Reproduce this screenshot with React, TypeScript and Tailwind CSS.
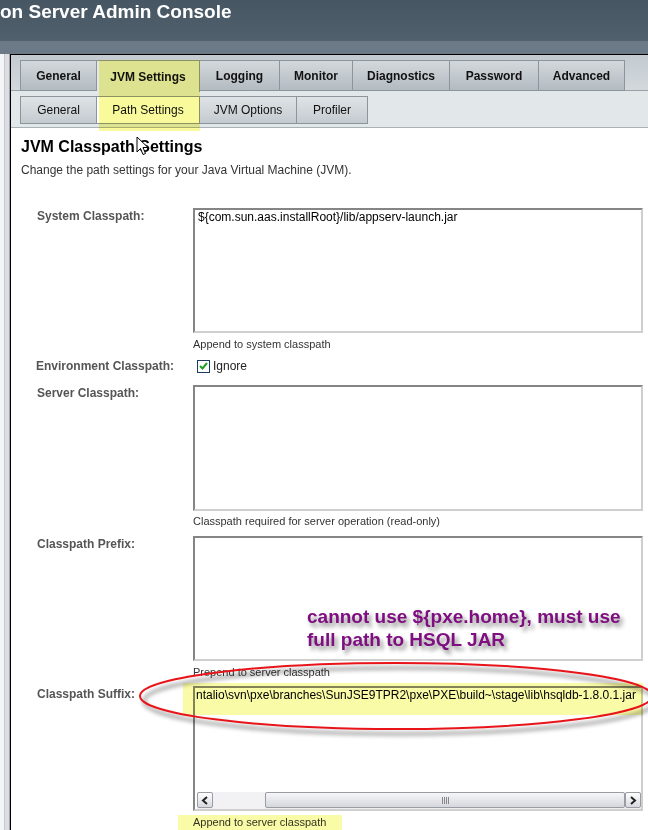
import React from "react";

const mainTabs = [
  { label: "General", w: "w-[77px]" },
  { label: "JVM Settings", w: "w-[103px]", active: true },
  { label: "Logging", w: "w-[80px]" },
  { label: "Monitor", w: "w-[73px]" },
  { label: "Diagnostics", w: "w-[97px]" },
  { label: "Password", w: "w-[89px]" },
  { label: "Advanced", w: "w-[86px]" },
];

const subTabs = [
  { label: "General", w: "w-[77px]" },
  { label: "Path Settings", w: "w-[103px]", active: true },
  { label: "JVM Options", w: "w-[97px]" },
  { label: "Profiler", w: "w-[71px]" },
];

const Box = ({ children, h = "h-[125px]" }: any) => (
  <div className={`w-[450px] ${h} border-2 border-t-[#858585] border-l-[#858585] border-r-[#cfcfcf] border-b-[#cfcfcf] bg-white relative overflow-hidden`}>
    {children}
  </div>
);

const Help = ({ text, mt }: any) => (
  <div className={`${mt} ml-[156px] text-[11px] leading-[12px] text-[#333]`}>{text}</div>
);

const Label = ({ text }: any) => (
  <div className="w-[156px] shrink-0 pt-[1px] text-[12px] leading-[14px] font-bold text-[#555]">{text}</div>
);

const Chevron = ({ dir }: any) => (
  <svg width="8" height="9" viewBox="0 0 8 9">
    <path
      d={dir === "left" ? "M6 1 L2 4.5 L6 8" : "M2 1 L6 4.5 L2 8"}
      stroke="#222"
      strokeWidth="2"
      fill="none"
    />
  </svg>
);

export default function App() {
  return (
    <div className="w-[648px] h-[830px] overflow-hidden relative bg-white font-['Liberation_Sans',Arial,sans-serif]">
      {/* header */}
      <div className="h-[41px] bg-gradient-to-b from-[#465663] to-[#50606d] text-white font-bold text-[19px] leading-[22px] pt-[1px] whitespace-nowrap">
        on Server Admin Console
      </div>
      <div className="h-[13px] bg-[#6b7a86]" />

      <div className="flex h-[776px]">
        {/* left strip */}
        <div className="w-[10px] flex bg-[#eceef0]">
          <div className="w-[4px] bg-[#f4f5f6]" />
          <div className="w-[1px] bg-[#c8c9cc]" />
          <div className="w-[4px] bg-[#dcdce4]" />
          <div className="w-[1px] bg-[#a4a6aa]" />
        </div>

        <div className="flex-1 border-l border-t border-black">
          {/* main tabs */}
          <div className="h-[36px] pt-[5px] pl-[9px] bg-gradient-to-b from-[#c4cbd0] to-[#d2d8dc] border-b border-[#9aa2a8] flex">
            {mainTabs.map((t, i) => (
              <div
                key={t.label}
                className={`${t.w} h-[31px] flex items-center justify-center text-[12px] font-bold text-[#111] border-t border-r border-[#8c959c] ${i === 0 ? "border-l" : ""} ${
                  t.active ? "bg-[#e2e7ea] h-[32px]" : "bg-gradient-to-b from-[#d3d8dc] to-[#b3bbc1] border-b"
                }`}
              >
                {t.label}
              </div>
            ))}
          </div>
          {/* sub tabs */}
          <div className="h-[37px] pt-[5px] pl-[9px] bg-[#e2e7ea] border-b border-[#aab1b6] flex">
            {subTabs.map((t, i) => (
              <div
                key={t.label}
                className={`${t.w} h-[28px] flex items-center justify-center text-[12px] text-[#111] border-t border-r border-b border-[#8c959c] ${i === 0 ? "border-l" : ""} ${
                  t.active ? "bg-white" : "bg-gradient-to-b from-[#dfe3e6] to-[#c4cbd0]"
                }`}
              >
                {t.label}
              </div>
            ))}
          </div>

          {/* content */}
          <div className="pl-[10px]">
            <div className="mt-[9px] text-[16px] leading-[20px] font-bold text-black">JVM Classpath Settings</div>
            <div className="mt-[6px] text-[12px] leading-[14px] text-[#333]">
              Change the path settings for your Java Virtual Machine (JVM).
            </div>

            <div className="ml-[16px] mt-[31px]">
              <div className="flex">
                <Label text="System Classpath:" />
                <Box>
                  <div className="pl-[3px] text-[12px] leading-[14px] text-black">
                    {"${com.sun.aas.installRoot}/lib/appserv-launch.jar"}
                  </div>
                </Box>
              </div>
              <Help mt="mt-[5px]" text="Append to system classpath" />

              <div className="flex mt-[9px] items-center">
                <div className="w-[156px] shrink-0 text-[12px] leading-[14px] font-bold text-[#555] -ml-[1px] mr-[1px]">
                  Environment Classpath:
                </div>
                <div className="ml-[4px] w-[13px] h-[13px] border border-[#1c3c5c] bg-white flex items-center justify-center">
                  <svg width="9" height="8" viewBox="0 0 9 8">
                    <path d="M1 4 L3.5 6.5 L8 1" stroke="#21a321" strokeWidth="2" fill="none" />
                  </svg>
                </div>
                <span className="ml-[3px] text-[12px] leading-[14px] text-[#222]">Ignore</span>
              </div>

              <div className="flex mt-[12px]">
                <Label text="Server Classpath:" />
                <Box h="h-[126px]" />
              </div>
              <Help mt="mt-[4px]" text="Classpath required for server operation (read-only)" />

              <div className="flex mt-[9px]">
                <Label text="Classpath Prefix:" />
                <Box />
              </div>
              <Help mt="mt-[5px]" text="Prepend to server classpath" />

              <div className="flex mt-[8px]">
                <Label text="Classpath Suffix:" />
                <Box>
                  <div className="pl-[1px] whitespace-nowrap text-[12px] leading-[14px] text-black">
                    {"ntalio\\svn\\pxe\\branches\\SunJSE9TPR2\\pxe\\PXE\\build~\\stage\\lib\\hsqldb-1.8.0.1.jar"}
                  </div>
                  <div className="absolute left-[2px] right-0 bottom-0 h-[17px] flex bg-[#eeeef2]">
                    <div className="w-[16px] h-[16px] border border-[#9a9ca4] rounded-[2px] bg-gradient-to-b from-white to-[#d8d9e0] flex items-center justify-center">
                      <Chevron dir="left" />
                    </div>
                    <div className="w-[52px] bg-[#f2f2f5]" />
                    <div className="flex-1 h-[16px] border border-[#9a9ca4] rounded-[2px] bg-gradient-to-b from-[#f6f6f9] to-[#d6d7de] flex items-center justify-center">
                      <div className="flex gap-[1px]">
                        <div className="w-[1px] h-[7px] bg-[#888]" />
                        <div className="w-[1px] h-[7px] bg-[#888]" />
                        <div className="w-[1px] h-[7px] bg-[#888]" />
                        <div className="w-[1px] h-[7px] bg-[#888]" />
                      </div>
                    </div>
                    <div className="w-[16px] h-[16px] border border-[#9a9ca4] rounded-[2px] bg-gradient-to-b from-white to-[#d8d9e0] flex items-center justify-center">
                      <Chevron dir="right" />
                    </div>
                  </div>
                </Box>
              </div>
              <Help mt="mt-[5px]" text="Append to server classpath" />
            </div>
          </div>
        </div>
      </div>

      {/* highlighter marks */}
      <div className="absolute left-[99px] top-[60px] w-[101px] h-[71px] bg-[#f9fa9c] mix-blend-multiply" />
      <div className="absolute left-[183px] top-[683px] w-[460px] h-[32px] bg-[#fafba6] mix-blend-multiply" />
      <div className="absolute left-[178px] top-[815px] w-[164px] h-[15px] bg-[#fafba6] mix-blend-multiply" />

      {/* red ellipse */}
      <svg className="absolute left-0 top-[640px]" width="648" height="110" viewBox="0 0 648 110">
        <defs>
          <filter id="sh" x="-10%" y="-30%" width="120%" height="160%">
            <feGaussianBlur stdDeviation="2" />
          </filter>
        </defs>
        <ellipse cx="400" cy="61" rx="256" ry="33" fill="none" stroke="#00000066" strokeWidth="3" filter="url(#sh)" />
        <ellipse cx="396" cy="56" rx="256" ry="33" fill="none" stroke="#e8141a" strokeWidth="2" />
      </svg>

      {/* annotation */}
      <div className="absolute left-[307px] top-[605px] text-[19px] leading-[23px] font-bold text-[#7f0f80] [text-shadow:3px_4px_4px_rgba(0,0,0,0.45)] whitespace-nowrap">
        <div>{"cannot use ${pxe.home}, must use"}</div>
        <div>full path to HSQL JAR</div>
      </div>

      {/* mouse cursor */}
      <svg className="absolute left-[136px] top-[136px]" width="13" height="20" viewBox="0 0 13 20">
        <path d="M1 1 L1 16 L4.5 12.5 L7 18.5 L9.5 17.5 L7 11.5 L12 11.5 Z" fill="white" stroke="black" strokeWidth="1" strokeLinejoin="round" />
      </svg>
    </div>
  );
}
